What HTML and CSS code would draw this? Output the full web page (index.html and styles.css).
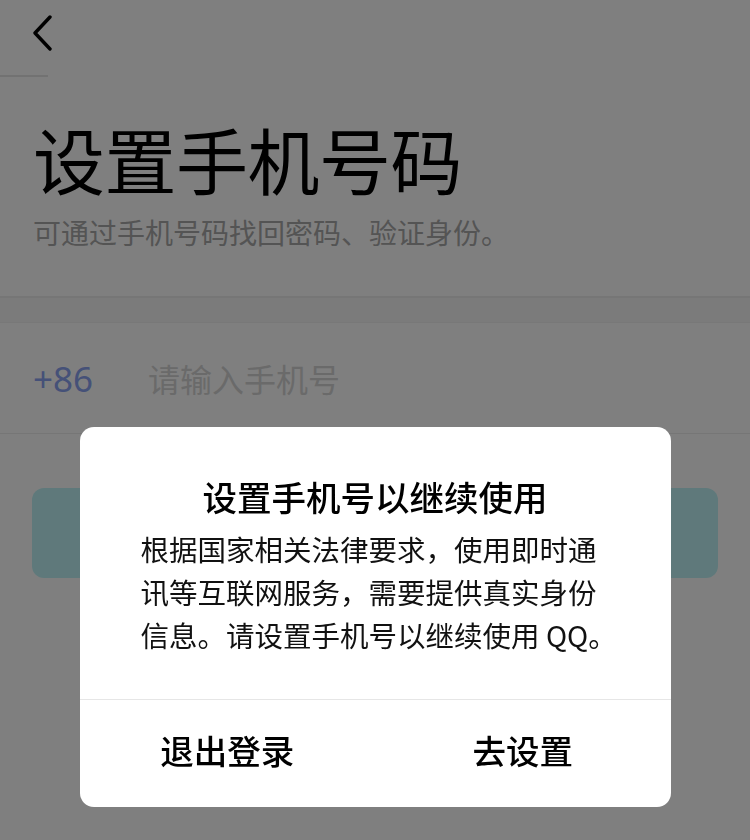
FILE: index.html
```html
<!DOCTYPE html>
<html lang="zh-CN">
<head>
  <meta charset="UTF-8">
  <meta name="viewport" content="width=device-width, initial-scale=1.0">
  <title>设置手机号码</title>
  <link rel="stylesheet" href="styles.css">
</head>
<body>
  <div class="page">
    <div class="nav-bar">
      <button class="back-btn" aria-label="返回">
        <svg width="22" height="36" viewBox="0 0 22 36">
          <path d="M18 2 L3 18 L18 34" fill="none" stroke="#000" stroke-width="3.4" stroke-linecap="round" stroke-linejoin="round"/>
        </svg>
      </button>
    </div>

    <div class="intro">
      <h1 class="intro-title">设置手机号码</h1>
      <p class="intro-desc">可通过手机号码找回密码、验证身份。</p>
    </div>

    <div class="band"></div>

    <div class="phone-row">
      <span class="area-code">+86</span>
      <input class="phone-input" type="text" placeholder="请输入手机号">
    </div>

    <div class="submit-wrap">
      <button class="submit-btn" disabled></button>
    </div>
  </div>

  <div class="mask">
    <div class="dialog">
      <div class="dialog-body">
        <h2 class="dialog-title">设置手机号以继续使用</h2>
        <p class="dialog-text">根据国家相关法律要求，使用即时通讯等互联网服务，需要提供真实身份信息。请设置手机号以继续使用 QQ。</p>
      </div>
      <div class="dialog-actions">
        <button class="dialog-btn">退出登录</button>
        <button class="dialog-btn">去设置</button>
      </div>
    </div>
  </div>
</body>
</html>
```

FILE: styles.css
```css
body {
  margin: 0;
  background-color: #fff;
  font-family: "Noto Sans CJK SC", "Noto Sans", sans-serif;
  color: #000;
}

.page {
  width: 750px;
  height: 840px;
  overflow: hidden;
}

.nav-bar {
  height: 77px;
  position: relative;
  padding: 15px 0 0 32px;
  box-sizing: border-box;
}

.nav-bar:after {
  content: '';
  position: absolute;
  left: 0;
  bottom: 0;
  width: 48px;
  height: 2px;
  background: #e4e4e4;
}

.back-btn {
  background: none;
  border: none;
  padding: 0;
  display: block;
}

.intro {
  padding: 38px 33px 0;
}

.intro-title {
  margin: 0;
  font-size: 72px;
  font-weight: 400;
  line-height: 86px;
  letter-spacing: -0.5px;
}

.intro-desc {
  margin: 14px 0 0;
  font-size: 28px;
  line-height: 34px;
  color: #a8a8a8;
}

.band {
  margin-top: 47px;
  height: 24px;
  background: #f6f6f6;
  border-top: 2px solid #ececec;
  border-bottom: 1px solid #f0f0f0;
}

.phone-row {
  display: flex;
  align-items: center;
  height: 110px;
  padding: 0 33px;
  border-bottom: 1px solid #ededed;
}

.area-code {
  width: 115px;
  font-family: "Noto Sans", sans-serif;
  font-size: 35px;
  color: #8aa2f0;
}

.phone-input {
  flex: 1;
  border: none;
  outline: none;
  background: none;
  padding: 0;
  font-family: "Noto Sans CJK SC", sans-serif;
  font-size: 32px;
}

.phone-input::placeholder {
  color: #d4d4d4;
}

.submit-wrap {
  padding: 54px 32px 0;
}

.submit-btn {
  display: block;
  width: 100%;
  height: 90px;
  border: none;
  border-radius: 12px;
  background-color: #bff3f6;
}

.mask {
  position: fixed;
  top: 0;
  left: 0;
  right: 0;
  bottom: 0;
  background: rgba(0, 0, 0, 0.5);
  display: flex;
  justify-content: center;
  align-items: flex-start;
  padding-top: 427px;
  box-sizing: border-box;
}

.dialog {
  width: 591px;
  background: #fff;
  border-radius: 14px;
  overflow: hidden;
}

.dialog-body {
  padding: 44px 49px 43px 61px;
  border-bottom: 1px solid #e6e6e6;
}

.dialog-title {
  margin: 0 0 6px -12px;
  font-size: 34.5px;
  font-weight: 500;
  line-height: 50px;
  text-align: center;
}

.dialog-text {
  margin: 0;
  font-size: 28.5px;
  line-height: 43px;
  color: #111;
}

.dialog-actions {
  display: flex;
  height: 107px;
}

.dialog-btn {
  flex: 1;
  border: none;
  background: none;
  padding: 0 0 8px;
  font-family: "Noto Sans CJK SC", sans-serif;
  font-size: 33.5px;
  font-weight: 500;
  color: #000;
}
```
